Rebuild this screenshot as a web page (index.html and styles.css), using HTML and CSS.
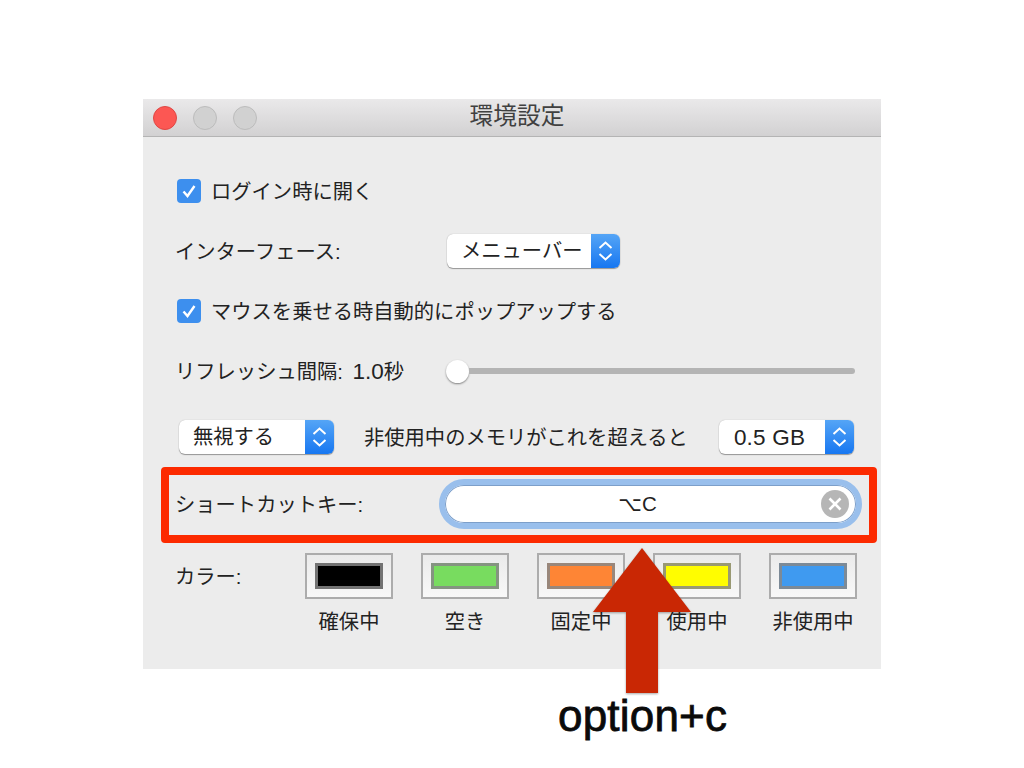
FILE: index.html
```html
<!DOCTYPE html>
<html lang="ja">
<head>
    <meta charset="UTF-8">
    <meta name="viewport" content="width=device-width, initial-scale=1.0">
    <title>環境設定</title>
    <link rel="stylesheet" href="styles.css">
</head>
<body>
    <div class="slide">
        <div class="window">
            <div class="titlebar">
                <span class="light light-close"></span>
                <span class="light"></span>
                <span class="light"></span>
                <span class="window-title">環境設定</span>
            </div>

            <div class="prefs">
                <div class="row row-login">
                    <span class="checkbox">
                        <svg width="24" height="24" viewBox="0 0 24 24"><path d="M6.5 12.5 L10.5 17 L17.5 7" fill="none" stroke="#fff" stroke-width="2.4"/></svg>
                    </span>
                    <span class="text">ログイン時に開く</span>
                </div>

                <div class="row row-next">
                    <span class="text field-label">インターフェース:</span>
                    <div class="popup popup-menu">
                        <span class="popup-value">メニューバー</span>
                        <span class="stepper">
                            <svg width="17" height="22" viewBox="0 0 17 22"><path d="M2.5 8 L8.5 2.5 L14.5 8 M2.5 14 L8.5 19.5 L14.5 14" fill="none" stroke="#fff" stroke-width="2"/></svg>
                        </span>
                    </div>
                </div>

                <div class="row row-next">
                    <span class="checkbox">
                        <svg width="24" height="24" viewBox="0 0 24 24"><path d="M6.5 12.5 L10.5 17 L17.5 7" fill="none" stroke="#fff" stroke-width="2.4"/></svg>
                    </span>
                    <span class="text">マウスを乗せる時自動的にポップアップする</span>
                </div>

                <div class="row row-next">
                    <span class="text refresh-label">リフレッシュ間隔: <span class="latin refresh-value">1.0</span>秒</span>
                    <div class="slider">
                        <span class="knob"></span>
                        <span class="track"></span>
                    </div>
                </div>

                <div class="row row-memory">
                    <div class="popup popup-action">
                        <span class="popup-value">無視する</span>
                        <span class="stepper">
                            <svg width="17" height="22" viewBox="0 0 17 22"><path d="M2.5 8 L8.5 2.5 L14.5 8 M2.5 14 L8.5 19.5 L14.5 14" fill="none" stroke="#fff" stroke-width="2"/></svg>
                        </span>
                    </div>
                    <span class="text">非使用中のメモリがこれを超えると</span>
                    <div class="popup popup-size">
                        <span class="popup-value latin">0.5 GB</span>
                        <span class="stepper">
                            <svg width="17" height="22" viewBox="0 0 17 22"><path d="M2.5 8 L8.5 2.5 L14.5 8 M2.5 14 L8.5 19.5 L14.5 14" fill="none" stroke="#fff" stroke-width="2"/></svg>
                        </span>
                    </div>
                </div>

                <div class="row row-shortcut">
                    <span class="text shortcut-label">ショートカットキー:</span>
                    <div class="shortcut-field">
                        <span class="shortcut-value">⌥C</span>
                        <span class="clear-button">
                            <svg width="28" height="28" viewBox="0 0 28 28"><path d="M8.5 8.5 L19.5 19.5 M19.5 8.5 L8.5 19.5" fill="none" stroke="#fff" stroke-width="2.6"/></svg>
                        </span>
                    </div>
                </div>

                <div class="row-colors">
                    <span class="text colors-label">カラー:</span>
                    <div class="color-item">
                        <span class="well"><span class="swatch swatch-black"></span></span>
                        <span class="text">確保中</span>
                    </div>
                    <div class="color-item">
                        <span class="well"><span class="swatch swatch-green"></span></span>
                        <span class="text">空き</span>
                    </div>
                    <div class="color-item">
                        <span class="well"><span class="swatch swatch-orange"></span></span>
                        <span class="text">固定中</span>
                    </div>
                    <div class="color-item">
                        <span class="well"><span class="swatch swatch-yellow"></span></span>
                        <span class="text">使用中</span>
                    </div>
                    <div class="color-item">
                        <span class="well"><span class="swatch swatch-blue"></span></span>
                        <span class="text">非使用中</span>
                    </div>
                </div>
            </div>
        </div>

        <p class="caption">option+c</p>

        <!-- annotation on top of the window -->
        <div class="highlight"></div>
        <svg class="arrow" width="104" height="150" viewBox="0 0 104 150">
            <path d="M51 1 L100 65 L67 65 L67 146 L35 146 L35 65 L2 65 Z" fill="#c92704"/>
        </svg>
    </div>
</body>
</html>
```

FILE: styles.css
```css
body {
    margin: 0;
    background: #fff;
    font-family: "Liberation Sans", "Noto Sans CJK JP", sans-serif;
    color: #222;
}
.slide {
    position: relative;
    width: 1024px;
    height: 768px;
    padding-top: 99px;
    box-sizing: border-box;
    overflow: hidden;
}
.window {
    width: 738px;
    height: 570px;
    margin-left: 143px;
    background: #ececec;
}
.titlebar {
    position: relative;
    display: flex;
    align-items: center;
    gap: 16px;
    height: 38px;
    padding-left: 10px;
    box-sizing: border-box;
    background: linear-gradient(#eae9ea, #d2d1d2);
    border-bottom: 1px solid #b4b4b4;
}
.light {
    width: 24px;
    height: 24px;
    box-sizing: border-box;
    border-radius: 50%;
    background: #d1d1d1;
    border: 1px solid #bcbcbc;
}
.light-close {
    background: #fc5753;
    border-color: #df4744;
}
.window-title {
    position: absolute;
    left: 10px;
    right: 0;
    top: 0;
    text-align: center;
    font-size: 23.7px;
    line-height: 35px;
    color: #404040;
}
.prefs {
    padding: 37px 26px 0 32px;
}
.row {
    display: flex;
    align-items: center;
    height: 34px;
}
.row-next {
    margin-top: 26px;
}
.text {
    flex: none;
    padding-top: 1px;
    font-size: 20.3px;
    line-height: 28px;
    white-space: nowrap;
}
.latin {
    font-size: 22.5px;
}
.refresh-value {
    margin-left: 4px;
}
.checkbox {
    flex: none;
    width: 24px;
    height: 24px;
    margin: 0 10px 0 2px;
    border-radius: 4px;
    background: #3d8fee;
}
.checkbox svg {
    display: block;
}
.field-label {
    width: 272px;
}
.refresh-label {
    width: 271px;
}
.popup {
    flex: none;
    display: flex;
    height: 34px;
    box-sizing: border-box;
    border-radius: 6px;
    background: #fff;
    box-shadow: 0 1px 1px rgba(0, 0, 0, 0.35), 0 0 1px rgba(0, 0, 0, 0.3);
    overflow: hidden;
}
.popup-value {
    flex: 1;
    padding-left: 14px;
    font-size: 20.3px;
    line-height: 35px;
    white-space: nowrap;
}
.popup-value.latin {
    padding-left: 15px;
    font-size: 22.5px;
    letter-spacing: 0.2px;
}
.popup-menu {
    width: 173px;
}
.popup-action {
    width: 155px;
    margin-left: 4px;
}
.popup-size {
    width: 135px;
    margin-left: 1px;
}
.stepper {
    flex: none;
    display: flex;
    align-items: center;
    justify-content: center;
    width: 29px;
    background: linear-gradient(#55a5f6, #1777f1);
}
.slider {
    flex: 1;
    display: flex;
    align-items: center;
}
.knob {
    flex: none;
    width: 23px;
    height: 23px;
    border-radius: 50%;
    background: #fff;
    box-shadow: 0 1px 2px rgba(0, 0, 0, 0.45);
}
.track {
    flex: 1;
    height: 6px;
    border-radius: 0 3px 3px 0;
    background: #b4b4b4;
}
.row-memory {
    margin-top: 32px;
    gap: 30px;
}
.row-shortcut {
    height: 50px;
    margin-top: 25px;
}
.shortcut-label {
    width: 264px;
}
.shortcut-field {
    flex: none;
    position: relative;
    display: flex;
    align-items: center;
    justify-content: center;
    width: 423px;
    height: 50px;
    padding-right: 26px;
    box-sizing: border-box;
    border: 6px solid #99bfec;
    border-radius: 25px;
    background: #fff;
    box-shadow: inset 0 0 0 1px #7d9fc9;
}
.shortcut-value {
    font-family: "Liberation Sans", "DejaVu Sans", sans-serif;
    font-size: 20.5px;
    line-height: 36px;
    color: #222;
}
.clear-button {
    position: absolute;
    right: 7px;
    top: 5px;
    width: 28px;
    height: 28px;
    border-radius: 50%;
    background: #b6b6b6;
}
.clear-button svg {
    display: block;
}
.row-colors {
    display: flex;
    gap: 28px;
    margin-top: 24px;
}
.colors-label {
    width: 102px;
    padding-top: 10px;
}
.color-item {
    flex: none;
    display: flex;
    flex-direction: column;
    align-items: center;
    width: 88px;
    gap: 8px;
}
.well {
    display: flex;
    align-items: center;
    justify-content: center;
    width: 88px;
    height: 46px;
    box-sizing: border-box;
    border: 2px solid #acacac;
    background: linear-gradient(#ebebeb, #f8f8f8);
}
.swatch {
    width: 68px;
    height: 26px;
    box-sizing: border-box;
    border: 3px solid rgba(135, 135, 135, 0.85);
}
.swatch-black {
    background: #000;
}
.swatch-green {
    background: #78dc5f;
}
.swatch-orange {
    background: #fe8535;
}
.swatch-yellow {
    background: #fffd00;
}
.swatch-blue {
    background: #3f9af0;
}
.caption {
    margin: 22px 0 0 558px;
    font-size: 44px;
    line-height: 50px;
    letter-spacing: 0.2px;
    color: #0a0a0a;
    -webkit-text-stroke: 0.8px #0a0a0a;
}
.highlight {
    position: absolute;
    left: 161px;
    top: 467px;
    width: 716px;
    height: 76px;
    box-sizing: border-box;
    border: 8px solid #fc2a00;
    border-radius: 4px;
}
.arrow {
    position: absolute;
    left: 591px;
    top: 547px;
    filter: drop-shadow(0 1px 1px rgba(0, 0, 0, 0.35));
}
```
